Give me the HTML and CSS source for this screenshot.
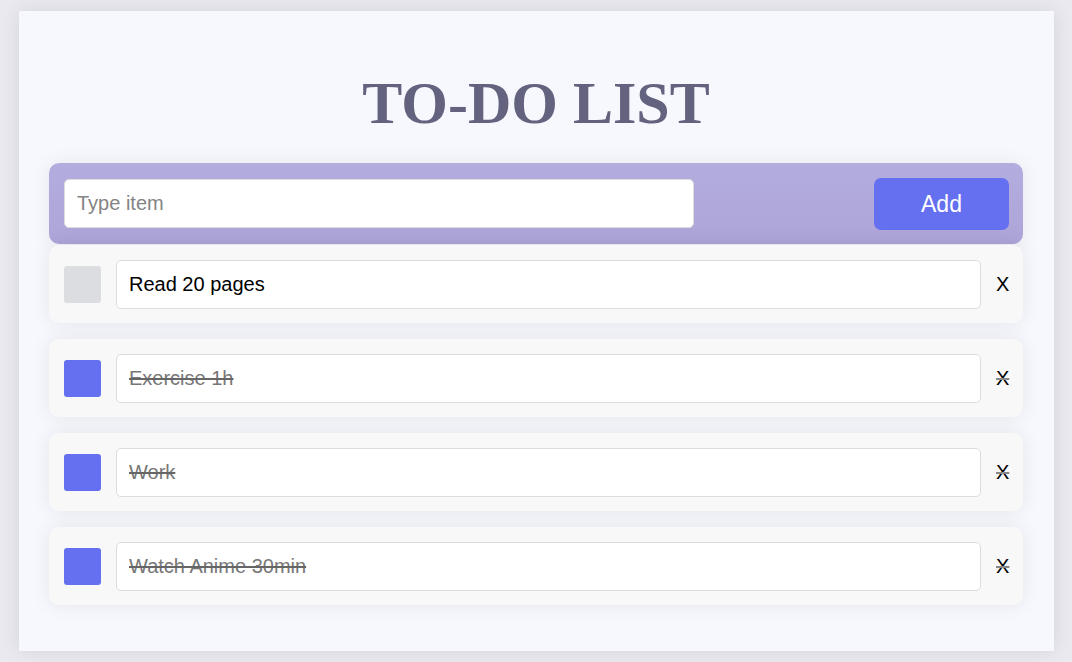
FILE: index.html
```html
<!DOCTYPE html>
<html>
<head>
<meta charset="utf-8">
<link rel="stylesheet" href="styles.css">
</head>
<body>
<div class="app">
  <h1 class="title">TO-DO LIST</h1>
  <div class="add-bar">
    <input class="add-input" type="text" placeholder="Type item">
    <button class="add-btn">Add</button>
  </div>
  <div class="list">
    <div class="item">
      <span class="check"></span>
      <input class="item-input" type="text" value="Read 20 pages">
      <span class="del">X</span>
    </div>
    <div class="item done">
      <span class="check"></span>
      <input class="item-input" type="text" value="Exercise 1h">
      <span class="del">X</span>
    </div>
    <div class="item done">
      <span class="check"></span>
      <input class="item-input" type="text" value="Work">
      <span class="del">X</span>
    </div>
    <div class="item done">
      <span class="check"></span>
      <input class="item-input" type="text" value="Watch Anime 30min">
      <span class="del">X</span>
    </div>
  </div>
</div>
</body>
</html>
```
FILE: styles.css
```css
* { box-sizing: border-box; }
html, body { margin: 0; padding: 0; }
body {
  background: #e9e9ef;
  font-family: "Liberation Sans", Arial, sans-serif;
  height: 662px;
  overflow: hidden;
}
.app {
  width: 1035px;
  height: 640px;
  margin: 11px 0 0 19px;
  background: #f7f8fd;
  box-shadow: 0 0 18px rgba(0, 0, 0, 0.09);
  padding: 58px 31px 0 30px;
}
.title {
  margin: 0 0 25px;
  text-align: center;
  font-family: "Liberation Serif", "Times New Roman", serif;
  font-weight: bold;
  font-size: 60px;
  line-height: 69px;
  color: #63637f;
  letter-spacing: 0;
}
.add-bar {
  height: 81px;
  background: linear-gradient(#b3addf, #aea4d8);
  border-radius: 10px;
  display: flex;
  align-items: center;
  justify-content: space-between;
  padding: 0 14px 0 15px;
  box-shadow: 0 0 20px rgba(0, 0, 0, 0.07);
}
.add-input {
  width: 630px;
  height: 49px;
  border: 1px solid #dcdcdc;
  border-radius: 5px;
  background: #fff;
  padding: 0 12px;
  font-family: "Liberation Sans", Arial, sans-serif;
  font-size: 20px;
  color: #222;
  outline: none;
}
.add-input::placeholder { color: #848484; }
.add-btn {
  width: 135px;
  height: 52px;
  border: none;
  border-radius: 7px;
  background: #6470f0;
  color: #fff;
  font-family: "Liberation Sans", Arial, sans-serif;
  font-size: 23px;
  padding: 2px 0 0;
}
.list {
  margin-top: 1px;
  display: flex;
  flex-direction: column;
  gap: 16px;
}
.item {
  height: 78px;
  background: #f8f8f8;
  border-radius: 10px;
  display: flex;
  align-items: center;
  padding: 0 14px 0 15px;
  gap: 15px;
  box-shadow: 0 0 20px rgba(0, 0, 0, 0.08);
}
.check {
  width: 37px;
  height: 37px;
  flex: none;
  border-radius: 3px;
  background: #dcdde0;
}
.item-input {
  flex: 1;
  height: 49px;
  border: 1px solid #dcdcdc;
  border-radius: 5px;
  background: #fff;
  padding: 0 12px;
  font-family: "Liberation Sans", Arial, sans-serif;
  font-size: 20px;
  color: #000;
  outline: none;
}
.del {
  font-size: 20px;
  color: #000;
  width: 13px;
  line-height: 1;
}
.done .check { background: #6470f0; }
.done .item-input {
  color: #777;
  text-decoration: line-through;
  text-decoration-color: #666;
}
.done .del {
  text-decoration: line-through;
  text-decoration-color: #888;
}
```
